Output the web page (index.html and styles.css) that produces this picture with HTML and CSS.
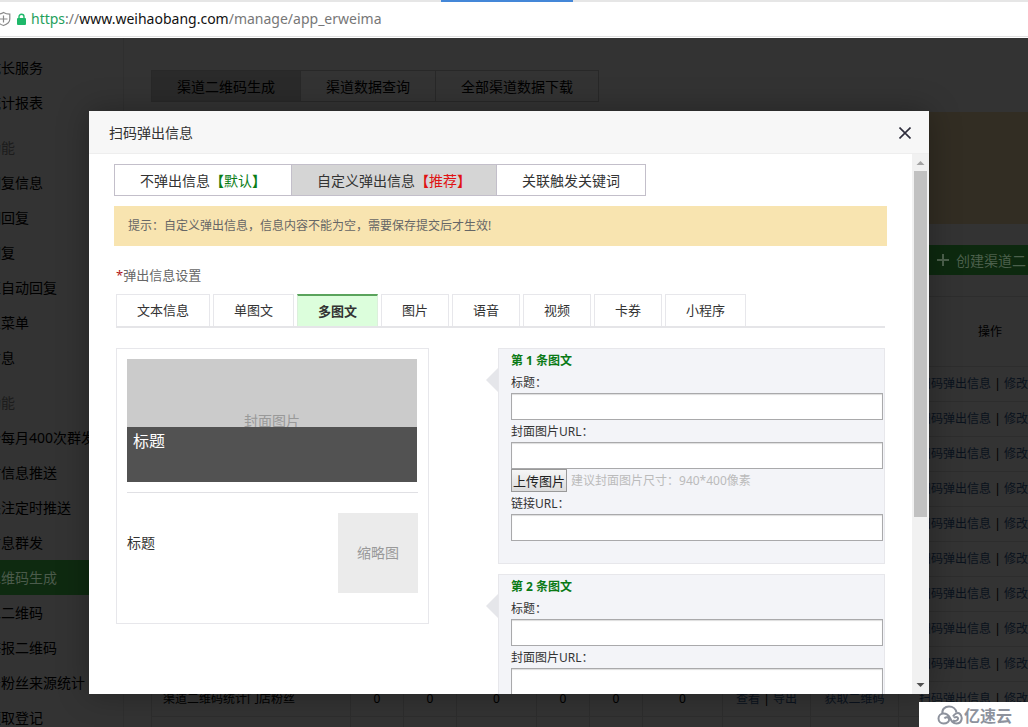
FILE: index.html
```
<!DOCTYPE html>
<html lang="zh-CN">
<head>
<meta charset="utf-8">
<title>扫码弹出信息</title>
<link rel="stylesheet" href="styles.css">
</head>
<body>
<header class="browser">
  <div class="tabstrip"><span class="tab-active"></span></div>
  <div class="address">
    <svg class="shield" width="12" height="16" viewBox="0 0 12 16" fill="none" stroke="#8a8a8a" stroke-width="1.2"><path d="M3.500 1.500 Q6 3.200 9.800 3.200 V8 Q9.800 12.500 3.500 14.500 Q-2.800 12.500 -2.800 8 V3.200 Q1 3.200 3.500 1.500 Z M-1 8 H7.500 M3.500 4.500 V11.500"/></svg>
    <svg class="lock" width="11" height="13" viewBox="0 0 11 13"><path d="M3 6 V3.800 A2.500 2.500 0 0 1 8 3.800 V6" fill="none" stroke="#1fb86a" stroke-width="1.400"/><rect x="1" y="5" width="9" height="7" rx="1" fill="#1fb86a"/></svg>
    <span class="url"><span class="scheme">https</span><span class="path">://</span>www.weihaobang.com<span class="path">/manage/app_erweima</span></span>
  </div>
</header>
<div class="page">
  <nav class="sidebar">
    <a href="#">成长服务</a>
    <a href="#">统计报表</a>
    <h2>功能</h2>
    <a href="#">回复信息</a>
    <a href="#">词回复</a>
    <a href="#">回复</a>
    <a href="#">区自动回复</a>
    <a href="#">义菜单</a>
    <a href="#">信息</a>
    <h2>功能</h2>
    <a href="#">个每月400次群发</a>
    <a href="#">时信息推送</a>
    <a href="#">关注定时推送</a>
    <a href="#">信息群发</a>
    <a href="#" class="current">二维码生成</a>
    <a href="#">二二维码</a>
    <a href="#">海报二维码</a>
    <a href="#">号粉丝来源统计</a>
    <a href="#">领取登记</a>
  </nav>
  <main class="main">
    <div class="page-tabs">
      <a href="#" class="on">渠道二维码生成</a><a href="#">渠道数据查询</a><a href="#">全部渠道数据下载</a>
    </div>
    <div class="notice"></div>
    <div class="toolbar"><button class="create" type="button"><svg width="14" height="14" viewBox="0 0 14 14" stroke="#4c604c" stroke-width="2"><path d="M7 1 V13 M1 7 H13"/></svg>创建渠道二</button></div>
    <table class="list">
      <colgroup><col class="c-name"><col class="c-s"><col class="c-s"><col class="c-m"><col class="c-s"><col class="c-s"><col class="c-m"><col class="c-l"><col class="c-l"><col class="c-ops"></colgroup>
      <thead><tr><th></th><th></th><th></th><th></th><th></th><th></th><th></th><th></th><th></th><th class="ops-head">操作</th></tr></thead>
      <tbody>
        <tr><td colspan="9"></td><td class="ops"><a href="#">扫码弹出信息</a> | <a href="#">修改</a></td></tr>
        <tr><td colspan="9"></td><td class="ops"><a href="#">扫码弹出信息</a> | <a href="#">修改</a></td></tr>
        <tr><td colspan="9"></td><td class="ops"><a href="#">扫码弹出信息</a> | <a href="#">修改</a></td></tr>
        <tr><td colspan="9"></td><td class="ops"><a href="#">扫码弹出信息</a> | <a href="#">修改</a></td></tr>
        <tr><td colspan="9"></td><td class="ops"><a href="#">扫码弹出信息</a> | <a href="#">修改</a></td></tr>
        <tr><td colspan="9"></td><td class="ops"><a href="#">扫码弹出信息</a> | <a href="#">修改</a></td></tr>
        <tr><td colspan="9"></td><td class="ops"><a href="#">扫码弹出信息</a> | <a href="#">修改</a></td></tr>
        <tr><td colspan="9"></td><td class="ops"><a href="#">扫码弹出信息</a> | <a href="#">修改</a></td></tr>
        <tr><td colspan="9"></td><td class="ops"><a href="#">扫码弹出信息</a> | <a href="#">修改</a></td></tr>
        <tr><td class="name">渠道二维码统计门店粉丝</td><td>0</td><td>0</td><td>0</td><td>0</td><td>0</td><td>0</td><td><a href="#">查看</a> | <a href="#">导出</a></td><td><a href="#">获取二维码</a></td><td class="ops"><a href="#">扫码弹出信息</a> | <a href="#">修改</a></td></tr>
        <tr><td></td><td></td><td></td><td></td><td></td><td></td><td></td><td></td><td></td><td></td></tr>
      </tbody>
    </table>
  </main>

  <section class="dialog" role="dialog" aria-labelledby="dialog-title">
    <div class="dialog-head">
      <h1 id="dialog-title">扫码弹出信息</h1>
      <button class="close" type="button" aria-label="关闭"><svg width="12" height="12" viewBox="0 0 12 12" stroke="#2e2d3c" stroke-width="1.600"><path d="M.5 .5 L11.500 11.500 M11.500 .5 L.5 11.500"/></svg></button>
    </div>
    <div class="dialog-body">
      <div class="content">
        <div class="modes">
          <button type="button">不弹出信息<span class="green"><b>【</b>默认<b>】</b></span></button><button type="button" class="on">自定义弹出信息<span class="red"><b>【</b>推荐<b>】</b></span></button><button type="button">关联触发关键词</button>
        </div>
        <p class="tip">提示：自定义弹出信息，信息内容不能为空，需要保存提交后才生效!</p>
        <div class="settings">
          <h2 class="settings-title"><span class="star">*</span>弹出信息设置</h2>
          <div class="types">
            <button type="button">文本信息</button>
            <button type="button">单图文</button>
            <button type="button" class="on">多图文</button>
            <button type="button">图片</button>
            <button type="button">语音</button>
            <button type="button">视频</button>
            <button type="button">卡券</button>
            <button type="button">小程序</button>
          </div>
          <div class="editor">
            <div class="preview">
              <div class="cover"><span class="cover-text">封面图片</span><div class="cover-title">标题</div></div>
              <div class="sub"><span class="sub-title">标题</span><span class="thumb">缩略图</span></div>
            </div>
            <div class="forms">
              <form class="card">
                <h3>第 1 条图文</h3>
                <label for="t1">标题：</label><input id="t1" type="text">
                <label for="c1">封面图片URL：</label><input id="c1" type="text">
                <div class="upload"><button type="button">上传图片</button><span>建议封面图片尺寸：940*400像素</span></div>
                <label for="l1">链接URL：</label><input id="l1" type="text">
              </form>
              <form class="card">
                <h3>第 2 条图文</h3>
                <label for="t2">标题：</label><input id="t2" type="text">
                <label for="c2">封面图片URL：</label><input id="c2" type="text">
              </form>
            </div>
          </div>
        </div>
      </div>
      <div class="scrollbar">
        <svg width="17" height="17" viewBox="0 0 17 17"><path d="M4.500 11 L8.500 7 L12.500 11 Z" fill="#a3a3a3"/></svg>
        <div class="thumb-bar"></div>
        <svg class="down" width="17" height="17" viewBox="0 0 17 17"><path d="M4.500 6 L8.500 10 L12.500 6 Z" fill="#505050"/></svg>
      </div>
    </div>
  </section>

  <div class="brand">
    <svg width="26" height="20" viewBox="0 0 26 20" fill="none" stroke="#8d929d" stroke-width="2"><path d="M5.500 9 C4.500 4.500 8 1.500 12 1.500 C16 1.500 19 4 19.500 7.500"/><path d="M16 11.500 C17.500 8.500 21 7 23 9 C26 12 25 18.500 19.500 18.500 C15.500 18.500 14.500 16 13 13 C11.500 10 9.500 8.500 6.500 8.500 A5 5 0 0 0 6.500 18.500 C10 18.500 12.500 16.500 12 14 C11.500 12 8.500 11.500 7.500 13.500 M16 15.500 C18 16.500 21.500 15.500 21 13 C20.500 11.500 18 11.500 17 13"/></svg>
    <span>亿速云</span>
  </div>
</div>
</body>
</html>
```
FILE: styles.css
```
* { box-sizing: border-box; }
body {
  margin: 0;
  height: 100vh;
  display: flex;
  flex-direction: column;
  overflow: hidden;
  background: #333;
  font-family: "Noto Sans", "Noto Sans CJK SC", sans-serif;
  font-size: 14px;
}
h1, h2, h3, p { margin: 0; font-weight: normal; }
a { color: inherit; text-decoration: none; }
button { font-family: inherit; margin: 0; cursor: pointer; }

/* Browser bar */
.browser { flex: none; height: 38px; background: #fff; }
.tabstrip { height: 2px; background: #e6e6e6; padding-left: 441px; }
.tab-active { display: block; width: 132px; height: 2px; background: #4487d8; }
.address { display: flex; align-items: center; height: 35px; border-bottom: 1px solid #e0e0e0; }
.shield { margin-right: 4px; }
.lock { margin-right: 4px; }
.url { padding-bottom: 2px; font-family: "Noto Sans", sans-serif; font-size: 14px; color: #111; white-space: nowrap; }
.scheme { color: #1ea05c; }
.path { color: #777; }

/* Dimmed page */
.page { flex: 1; min-height: 0; position: relative; display: flex; overflow: hidden; }
.sidebar { flex: none; width: 124px; padding-top: 12px; border-right: 1px solid #2f2f2f; overflow: hidden; }
.sidebar a, .sidebar h2 {
  display: block;
  height: 35px;
  line-height: 35px;
  text-indent: -13px;
  font-size: 14px;
  color: #000;
  white-space: nowrap;
}
.sidebar h2 { margin-top: 10px; color: #1c1c1c; }
.sidebar .current { background: #0e2a10; color: #4b5b4b; }
.main { flex: 1; min-width: 0; padding: 32px 0 0 27px; overflow: hidden; }
.page-tabs { display: flex; }
.page-tabs a {
  height: 32px;
  line-height: 32px;
  padding: 0 25px;
  border: 1px solid #282828;
  border-left-width: 0;
  color: #000;
}
.page-tabs a:first-child { border-left-width: 1px; }
.page-tabs .on { background: #2a2a2a; }
.notice { height: 112px; margin-top: 10px; background: #322d23; }
.toolbar { display: flex; padding: 21px 0; padding-left: 773px; }
.create {
  flex: none;
  display: flex;
  align-items: center;
  gap: 6px;
  height: 30px;
  padding: 0 12px;
  border: 0;
  background: #0d290f;
  color: #4c604c;
  font-size: 14px;
  white-space: nowrap;
}
.list {
  width: 929px;
  table-layout: fixed;
  border-collapse: collapse;
  font-size: 12px;
  color: #000;
}
.list th, .list td {
  height: 35px;
  padding: 0;
  border: 1px solid #2d2d2d;
  font-weight: normal;
  text-align: center;
  line-height: 20px;
  white-space: nowrap;
}
.list th { height: 70px; }
.list a { color: #0a121d; }
.list td.ops { text-align: left; padding-left: 20px; }
.list th.ops-head { text-align: left; padding-left: 79px; }
.list td.name { text-align: left; padding-left: 11px; }
.c-name { width: 199px; }
.c-s { width: 53px; }
.c-m { width: 80px; }
.c-l { width: 88px; }
.c-ops { width: 182px; }

/* Dialog */
.dialog {
  position: absolute;
  top: 73px;
  right: 99px;
  bottom: 33px;
  left: 89px;
  display: flex;
  flex-direction: column;
  background: #fff;
  box-shadow: 0 0 30px rgba(0, 0, 0, .3);
}
.dialog-head {
  flex: none;
  display: flex;
  align-items: center;
  justify-content: space-between;
  height: 43px;
  padding: 0 13px 0 20px;
  background: #f7f7f7;
  border-bottom: 1px solid #eee;
}
.dialog-head h1 { font-size: 14px; color: #333; }
.close { display: flex; padding: 6px 5px 5px; border: 0; background: none; }
.dialog-body { flex: 1; min-height: 0; display: flex; }
.content { flex: 1; min-width: 0; padding: 10px 25px 0; overflow: hidden; }
.modes { display: flex; }
.modes button {
  height: 32px;
  padding: 0 25px;
  border: 1px solid #c3bfca;
  background: #fff;
  color: #333;
  font-size: 14px;
  white-space: nowrap;
}
.modes button + button { border-left-width: 0; }
.modes .on { background: #d5d5d5; }
.green { color: #0a7d16; }
.red { color: #e01212; }
.tip {
  margin-top: 10px;
  padding: 0 14px;
  background: #f8e4b0;
  color: #666;
  font-size: 12px;
  line-height: 40px;
}
.settings { padding: 20px 2px 0; }
.settings-title { font-size: 13px; line-height: 18px; color: #666; }
.star { color: #b01818; }
.types { display: flex; gap: 3px; margin-top: 10px; border-bottom: 2px solid #e5e5e8; }
.types button {
  height: 32px;
  padding: 0 20px 2px;
  border: 1px solid #e7e7eb;
  border-bottom: 0;
  background: #fff;
  color: #333;
  font-size: 13px;
  white-space: nowrap;
}
.types .on { background: #dcfedc; border-top: 2px solid #5aa35c; border-color: #5aa35c #dcf0dc; font-weight: bold; }
.editor { display: grid; grid-template-columns: 313px 1fr; gap: 69px; align-items: start; margin-top: 20px; }
.preview { padding: 10px 10px 30px; border: 1px solid #e7e7eb; }
.cover {
  display: flex;
  flex-direction: column;
  justify-content: flex-end;
  align-items: center;
  height: 123px;
  margin-right: 1px;
  background: #cbcbcb;
}
.cover-text { height: 16px; line-height: 20px; font-size: 14px; color: #999; overflow: hidden; }
.cover-title { width: 100%; height: 55px; padding: 2px 6px; background: #525252; color: #fff; font-size: 16px; line-height: 24px; }
.sub { display: flex; justify-content: space-between; margin-top: 10px; padding-top: 20px; border-top: 1px solid #e0e0e4; }
.sub-title { padding-top: 20px; line-height: 20px; color: #333; }
.thumb { width: 80px; line-height: 80px; background: #ebebeb; color: #999; text-align: center; }
.forms { display: grid; gap: 10px; }
.card {
  position: relative;
  display: flex;
  flex-direction: column;
  padding: 0 1px 22px 12px;
  border: 1px solid #e7e7eb;
  background: #f3f4f8;
  font-size: 12px;
  color: #333;
}
.card::before {
  content: "";
  position: absolute;
  top: 19px;
  left: -13px;
  border: 12px solid transparent;
  border-left-width: 0;
  border-right-color: #e5e6ea;
}
.card h3, .card label { height: 22px; line-height: 24px; }
.card h3 { font-size: 12px; font-weight: bold; color: #0a7a16; }
.card input {
  width: 100%;
  height: 27px;
  padding: 0 4px;
  border: 1px solid #a9a9ab;
  background: #fff;
  box-shadow: inset 0 1px 1px #ddd;
  font: inherit;
}
.upload { display: flex; align-items: center; gap: 4px; height: 23px; line-height: 22px; color: #bbb; white-space: nowrap; }
.upload button {
  height: 23px;
  padding: 0 1px;
  border: 1px solid #999;
  background: linear-gradient(#f6f6f6, #dcdcdc);
  color: #222;
  font-size: 13px;
  line-height: 20px;
}
.scrollbar { flex: none; width: 17px; display: flex; flex-direction: column; background: #f1f1f1; }
.scrollbar svg { flex: none; }
.thumb-bar { height: 64%; margin: 0 2px; background: #c1c1c1; }
.scrollbar .down { margin-top: auto; }

/* Corner mark */
.brand {
  position: absolute;
  right: 0;
  bottom: 0;
  display: flex;
  align-items: center;
  gap: 1px;
  width: 109px;
  height: 25px;
  padding-left: 18px;
  background: #fff;
  color: #8d929d;
  font-size: 16px;
  font-weight: bold;
}
```
